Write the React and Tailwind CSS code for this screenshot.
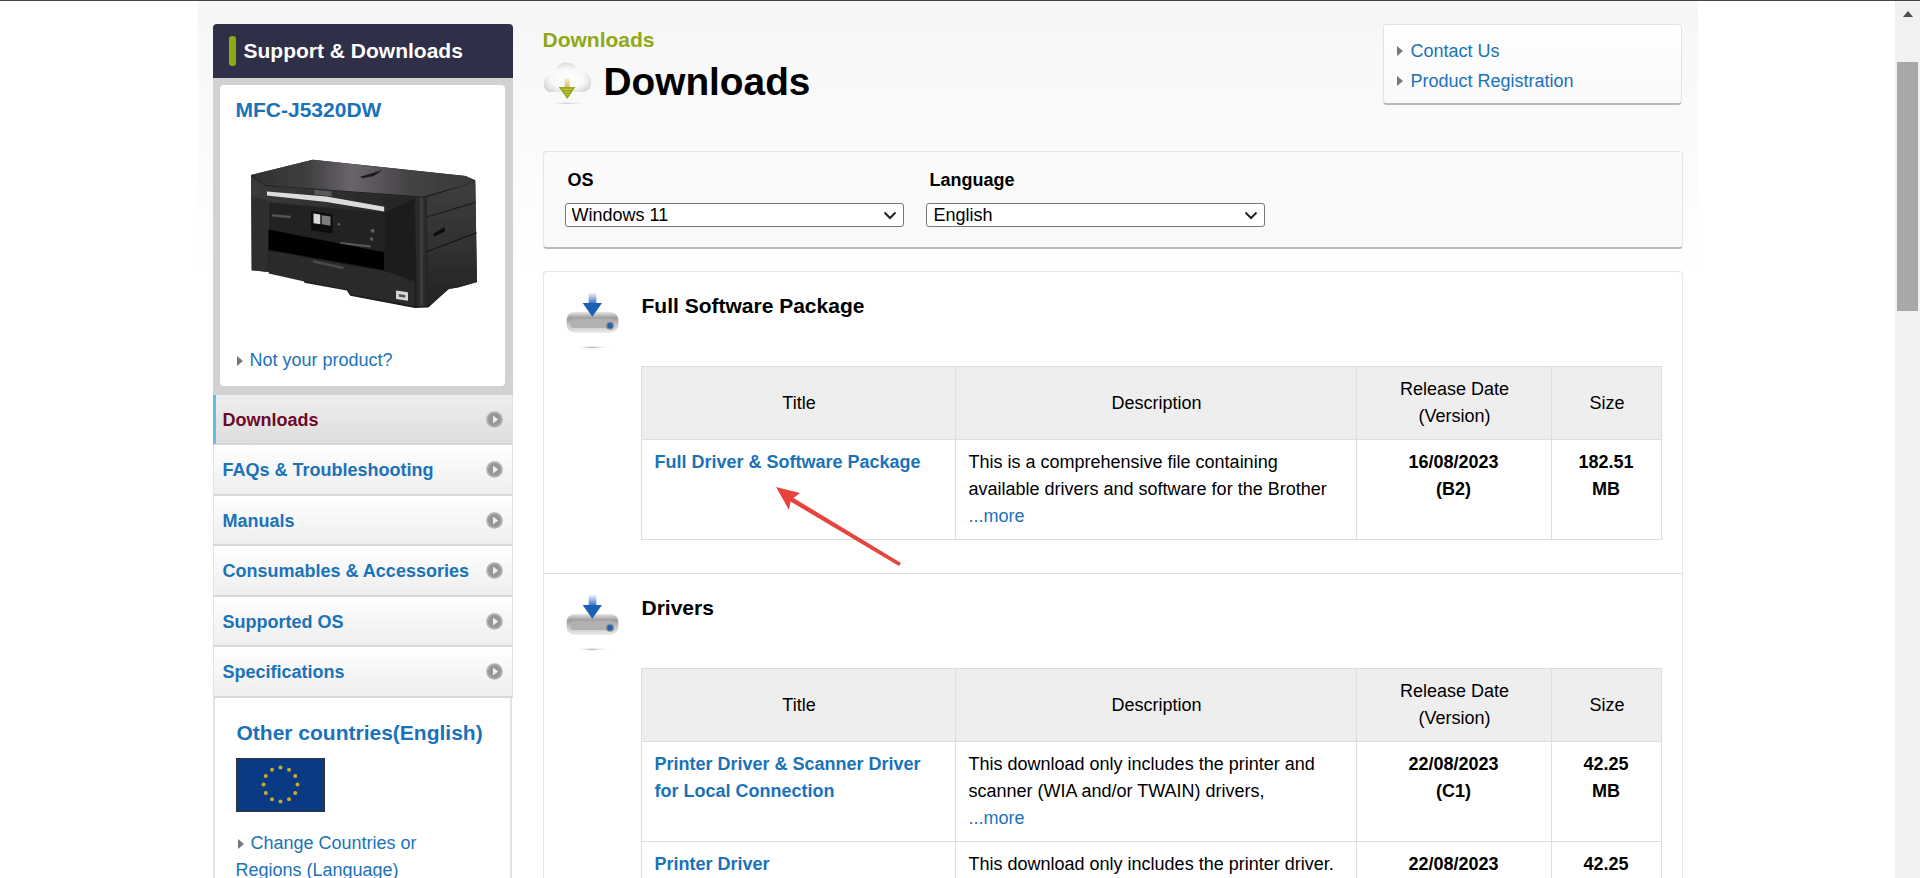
import React from "react";

const Tri = ({ className = "" }) => (
  <span className={"inline-block w-0 h-0 border-y-[5px] border-l-[6px] border-y-transparent border-l-[#777] " + className} />
);

const Circle = () => (
  <svg width="17" height="17" viewBox="0 0 17 17" className="shrink-0">
    <circle cx="8.5" cy="8.5" r="8.3" fill="#b0b0b0" />
    <circle cx="8.5" cy="8.5" r="6.4" fill="#969696" />
    <path d="M7 4.4 L12.2 8.5 L7 12.6 Z" fill="#ededed" />
  </svg>
);

const Drive = ({ id }) => (
  <svg width="53" height="57" viewBox="18 15 159 171">
    <defs>
      <linearGradient id={id + "a"} x1="0" y1="0" x2="0" y2="1">
        <stop offset="0" stopColor="#eef2fb" />
        <stop offset="1" stopColor="#2a6cc0" />
      </linearGradient>
      <linearGradient id={id + "b"} x1="0" y1="0" x2="0" y2="1">
        <stop offset="0" stopColor="#e6e6e6" />
        <stop offset="0.3" stopColor="#9c9a9a" />
        <stop offset="0.6" stopColor="#c6c4c4" />
        <stop offset="1" stopColor="#e8e8e8" />
      </linearGradient>
      <radialGradient id={id + "c"}>
        <stop offset="0" stopColor="#a8a8a8" />
        <stop offset="1" stopColor="#fff" stopOpacity="0" />
      </radialGradient>
      <filter id={id + "f"} x="-10%" y="-10%" width="120%" height="120%">
        <feGaussianBlur stdDeviation="1.6" />
      </filter>
    </defs>
    <g filter={`url(#${id}f)`}>
      <rect x="20" y="72" width="155" height="62" rx="24" fill={`url(#${id}b)`} />
      <rect x="32" y="92" width="130" height="28" rx="8" fill="#b2b0b0" />
      <rect x="86" y="15" width="23" height="34" fill={`url(#${id}a)`} />
      <path d="M68 45 L86 45 L109 45 L126 45 L97 86 Z" fill="#1d5fb6" />
      <circle cx="150" cy="113" r="12" fill="#8a8a8a" />
      <circle cx="150" cy="113" r="8" fill="#1a62b8" />
    </g>
    <ellipse cx="97" cy="178" rx="54" ry="5" fill={`url(#${id}c)`} />
  </svg>
);

const Cloud = () => (
  <svg width="49" height="48" viewBox="15 18 147 144">
    <defs>
      <radialGradient id="cl" cx="0.5" cy="0.55" r="0.6">
        <stop offset="0" stopColor="#ffffff" />
        <stop offset="0.6" stopColor="#f8f8f8" />
        <stop offset="1" stopColor="#cfcfcf" />
      </radialGradient>
      <radialGradient id="cs">
        <stop offset="0" stopColor="#c4c4c4" />
        <stop offset="1" stopColor="#fff" stopOpacity="0" />
      </radialGradient>
      <linearGradient id="cst" x1="0" y1="0" x2="0" y2="1">
        <stop offset="0" stopColor="#fbf3dd" />
        <stop offset="1" stopColor="#e0b860" />
      </linearGradient>
      <filter id="cb" x="-10%" y="-10%" width="120%" height="120%">
        <feGaussianBlur stdDeviation="1.4" />
      </filter>
    </defs>
    <g filter="url(#cb)">
      <path d="M38 120 C22 120 15 104 18 90 C21 74 34 64 48 68 C50 45 70 30 88 32 C108 34 118 45 118 58 C136 52 160 70 160 90 C160 108 148 120 132 120 Z" fill="url(#cl)" />
      <rect x="80" y="78" width="15" height="28" fill="url(#cst)" />
      <path d="M62 105 L112 105 L88 141 Z" fill="#93a81e" />
      <path d="M72 112 H102 M78 120 H96 M83 128 H92" stroke="#d8cb55" strokeWidth="3" />
    </g>
    <ellipse cx="88" cy="154" rx="62" ry="5" fill="url(#cs)" />
  </svg>
);

const Printer = () => (
  <svg width="235" height="158" viewBox="0 0 690 465" className="block">
    <defs>
      <linearGradient id="ptop" x1="0" y1="0" x2="1" y2="0">
        <stop offset="0" stopColor="#303030" />
        <stop offset="0.25" stopColor="#3f3f40" />
        <stop offset="0.45" stopColor="#6a646c" />
        <stop offset="0.7" stopColor="#454345" />
        <stop offset="1" stopColor="#383838" />
      </linearGradient>
      <linearGradient id="pside" x1="0" y1="0" x2="0" y2="1">
        <stop offset="0" stopColor="#3e3e3e" />
        <stop offset="1" stopColor="#242424" />
      </linearGradient>
      <linearGradient id="pfront" x1="0" y1="0" x2="1" y2="0">
        <stop offset="0" stopColor="#3a3a3a" />
        <stop offset="1" stopColor="#232323" />
      </linearGradient>
      <filter id="pb" x="-2%" y="-2%" width="104%" height="104%">
        <feGaussianBlur stdDeviation="1.3" />
      </filter>
    </defs>
    <g filter="url(#pb)">
      <path d="M8 65 L190 20 L640 68 L668 80 L673 380 L620 395 L590 400 L530 455 L490 456 L300 420 L290 405 L165 382 L160 360 L10 345 Z" fill="#1e1e1e" />
      <path d="M8 65 L190 20 L640 68 L668 85 L515 128 L200 105 L50 95 Z" fill="url(#ptop)" />
      <path d="M330 70 L395 50 L370 68 L335 74 Z" fill="#1d1d1d" />
      <path d="M8 68 L50 97 L200 107 L515 130 L490 300 L60 230 L10 130 Z" fill="url(#pfront)" />
      <path d="M10 128 L58 140 L58 350 L10 345 Z" fill="#2e2e2e" />
      <path d="M195 108 L245 113 L245 127 L195 122 Z" fill="#5a5a5a" />
      <path d="M55 113 L230 128 L400 158 L400 172 L230 144 L55 125 Z" fill="#dcdcdc" />
      <path d="M60 145 L400 176 L400 300 L60 230 Z" fill="#232323" />
      <path d="M70 180 L125 185 L125 192 L70 187 Z" fill="#555" />
      <path d="M185 170 L248 180 L248 237 L185 228 Z" fill="#0d0d0d" />
      <path d="M192 178 L212 181 L212 210 L192 207 Z" fill="#d8d8d8" />
      <path d="M216 183 L242 187 L242 214 L216 210 Z" fill="#7c7c7c" />
      <circle cx="366" cy="229" r="6" fill="#5c5c5c" />
      <circle cx="363" cy="253" r="5" fill="#5c5c5c" />
      <circle cx="267" cy="210" r="4" fill="#5c5c5c" />
      <path d="M270 262 L360 272 L360 278 L270 268 Z" fill="#5a5a5a" />
      <path d="M60 225 L400 292 L400 345 L60 285 Z" fill="#040404" />
      <path d="M60 288 L400 348 L490 368 L490 450 L300 415 L290 400 L165 378 L60 355 Z" fill="#2c2c2c" />
      <path d="M190 315 L280 335 L280 342 L190 322 Z" fill="#4a4a4a" />
      <path d="M400 175 L490 135 L490 380 L400 345 Z" fill="#1f1f1f" />
      <path d="M492 130 L525 128 L525 450 L496 452 Z" fill="#2c2c2c" />
      <path d="M505 132 L515 132 L515 450 L505 450 Z" fill="#3a3a3a" />
      <path d="M526 130 L668 85 L673 380 L620 395 L590 400 L528 452 Z" fill="url(#pside)" />
      <path d="M527 188 L670 145 M527 290 L672 235" stroke="#161616" strokeWidth="3" />
      <path d="M545 238 L578 218 L578 232 L548 246 Z" fill="#0c0c0c" />
      <path d="M435 405 L470 410 L470 435 L435 430 Z" fill="#d8d8d8" />
      <path d="M443 415 L462 418 L462 426 L443 423 Z" fill="#555" />
    </g>
  </svg>
);

const MENU = [
  ["Downloads", "h-[50px]", true],
  ["FAQs & Troubleshooting", "h-[51px]"],
  ["Manuals", "h-[50px]"],
  ["Consumables & Accessories", "h-[51px]"],
  ["Supported OS", "h-[50px]"],
  ["Specifications", "h-[51px]"],
];

const Sidebar = () => (
  <aside className="w-[300px] shrink-0">
    <div className="h-[54px] bg-[#2f2f47] rounded-t-[4px] flex items-center pl-4 gap-2">
      <span className="w-[7px] h-[30px] rounded-[3px] bg-[#8fa815]" />
      <span className="text-white font-bold text-[21px]">Support &amp; Downloads</span>
    </div>
    <div className="bg-[#d2d2d2] pt-[7px] pb-[9px] pl-[7px] pr-2">
      <div className="h-[301px] bg-white rounded-[4px] pt-[11px] pl-[15px] flex flex-col">
        <div className="text-[#1a72b9] font-bold text-[21px] leading-[27px] pl-[1px]">MFC-J5320DW</div>
        <div className="mt-[30px] ml-[13px]"><Printer /></div>
        <div className="mt-[36px] flex items-center gap-[7px] text-[18px] leading-[27px] text-[#1a72b9]">
          <Tri className="ml-[2px]" /><span>Not your product?</span>
        </div>
      </div>
    </div>
    {MENU.map(([label, h, active]) => (
      <div
        key={label}
        className={
          h + " flex items-center justify-between pr-[9px] border-b-2 border-[#d8d8d8] border-x border-x-[#e2e2e2] font-bold text-[18px] " +
          (active
            ? "pl-[7px] bg-gradient-to-b from-[#eeeeee] to-[#dedede] text-[#6d0a2a] border-l-[3px] border-l-[#5fbbf0]"
            : "pl-[9px] bg-gradient-to-b from-white to-[#eeeeee] text-[#1a72b9]")
        }
      >
        <span className="mt-[2px]">{label}</span>
        <Circle />
      </div>
    ))}
    <div className="w-[299px] border-x-2 border-[#e2e2e2] bg-white pl-[21px] pt-[21px] pb-10">
      <div className="text-[#1a72b9] font-bold text-[21px] leading-[27px] pl-[1px]">Other countries(English)</div>
      <svg width="89" height="54" viewBox="0 0 89 54" className="mt-[12px] block">
        <rect x="0.5" y="0.5" width="88" height="53" fill="#0a3a84" stroke="#333" />
        {Array.from({ length: 12 }, (_, i) => {
          const a = (i * Math.PI) / 6;
          return <circle key={i} cx={44.5 + 17 * Math.sin(a)} cy={26.5 - 17 * Math.cos(a)} r="2" fill="#c9ab2a" />;
        })}
      </svg>
      <div className="mt-[18px] text-[18px] leading-[27px] text-[#1a72b9]">
        <Tri className="ml-[2px] mr-[7px]" />Change Countries or<br />Regions (Language)
      </div>
    </div>
  </aside>
);

const Th = ({ children }) => (
  <th className="border border-[#dddddd] font-normal text-center align-middle py-[9px] pl-[15px] pr-[13px]">{children}</th>
);
const Td = ({ children, className = "" }) => (
  <td className={"border border-[#dddddd] align-top pt-[9px] pb-[9px] pl-[13px] pr-[11px] " + className}>{children}</td>
);

const Table = ({ rows }) => (
  <table className="w-[1020px] table-fixed border-collapse text-[18px] leading-[27px] text-black">
    <colgroup>
      <col className="w-[314px]" /><col className="w-[401px]" /><col className="w-[195px]" /><col className="w-[110px]" />
    </colgroup>
    <thead>
      <tr className="bg-[#eeeeee]">
        <Th>Title</Th><Th>Description</Th><Th>Release Date<br />(Version)</Th><Th>Size</Th>
      </tr>
    </thead>
    <tbody>
      {rows.map((r) => (
        <tr key={r.title}>
          <Td className="font-bold text-[#1a72b9]">{r.title}</Td>
          <Td>{r.desc}{r.more && <><br /><span className="text-[#1a72b9]">...more</span></>}</Td>
          <Td className="font-bold text-center !pl-3 !pr-3">{r.date}<br />{r.ver}</Td>
          <Td className="font-bold text-center !pl-3 !pr-3">{r.size}<br />MB</Td>
        </tr>
      ))}
    </tbody>
  </table>
);

const Section = ({ id, title, rows, border }) => (
  <section className={"flex pt-[21px] pb-[33px] " + (border ? "border-t border-[#dfdfdf]" : "")}>
    <div className="w-[97px] shrink-0 pl-[22px]"><Drive id={id} /></div>
    <div>
      <h2 className="text-[21px] font-bold leading-[27px] -mt-[1px] mb-[47px] pl-[1px] text-black">{title}</h2>
      <Table rows={rows} />
    </div>
  </section>
);

const Select = ({ value, pad }) => (
  <div className="relative mt-[11px] w-[339px] h-[24px]">
    <select defaultValue={value} className={"block w-full h-full appearance-none bg-white border border-[#767676] rounded-[3px] text-[18px] leading-[22px] " + pad}>
      <option>{value}</option>
    </select>
    <svg width="14" height="9" viewBox="0 0 14 9" className="absolute right-[7px] top-[8px] pointer-events-none">
      <path d="M1.5 1.5 L7 7 L12.5 1.5" fill="none" stroke="#222" strokeWidth="2" />
    </svg>
  </div>
);

const Main = () => (
  <main className="w-[1140px] shrink-0 relative">
    <div className="h-[127px] flex justify-between">
      <div>
        <div className="text-[#8fa815] font-bold text-[21px] leading-[27px] mt-[2px]">Downloads</div>
        <div className="flex items-center gap-3 mt-[5px]">
          <Cloud />
          <h1 className="text-[38.8px] leading-[48px] font-bold text-black">Downloads</h1>
        </div>
      </div>
      <div className="w-[299px] h-[81px] mr-[1px] bg-gradient-to-b from-white to-[#f9f9f9] rounded-[4px] border border-[#e3e3e3] border-b-2 border-b-[#b9b9b9] pl-[13px] pt-[11px] text-[18px] leading-[30px] text-[#1a72b9]">
        <div className="flex items-center gap-2"><Tri /><span>Contact Us</span></div>
        <div className="flex items-center gap-2"><Tri /><span>Product Registration</span></div>
      </div>
    </div>
    <div className="h-[98px] bg-gradient-to-b from-[#fbfbfb] to-[#f9f9f9] rounded-[4px] border border-[#e5e5e5] border-b-2 border-b-[#b9b9b9] flex gap-[22px] pl-[21px] pt-[16px] text-black">
      <div className="w-[339px]">
        <div className="font-bold text-[18px] leading-[24px] pl-[3px]">OS</div>
        <Select value="Windows 11" pad="pl-[6px]" />
      </div>
      <div className="w-[339px]">
        <div className="font-bold text-[18px] leading-[24px] pl-[4px]">Language</div>
        <Select value="English" pad="pl-[7px]" />
      </div>
    </div>
    <div className="mt-[22px] bg-white rounded-t-[4px] border-x border-t border-[#e5e5e5]">
      <Section
        id="d1"
        title="Full Software Package"
        rows={[{
          title: "Full Driver & Software Package",
          desc: <>This is a comprehensive file containing<br />available drivers and software for the Brother</>,
          more: true, date: "16/08/2023", ver: "(B2)", size: "182.51",
        }]}
      />
      <Section
        id="d2"
        border
        title="Drivers"
        rows={[
          {
            title: <>Printer Driver &amp; Scanner Driver<br />for Local Connection</>,
            desc: <>This download only includes the printer and<br />scanner (WIA and/or TWAIN) drivers,</>,
            more: true, date: "22/08/2023", ver: "(C1)", size: "42.25",
          },
          {
            title: "Printer Driver",
            desc: <>This download only includes the printer driver.</>,
            date: "22/08/2023", ver: "", size: "42.25",
          },
        ]}
      />
    </div>
    <svg width="130" height="80" viewBox="0 0 130 80" className="absolute left-[231px] top-[462px] pointer-events-none">
      <path d="M2 1 L26 7 L19.5 12 L127 77 L125 80 L16.5 15.5 L15 24 Z" fill="#e8433e" />
    </svg>
  </main>
);

export default function App() {
  return (
    <div className="h-[878px] overflow-hidden flex bg-white text-[18px] [font-family:'Liberation_Sans',Arial,sans-serif] border-t border-[#444444]">
      <div className="w-[1895px] shrink-0">
        <div className="mx-auto w-[1500px] h-[877px] flex gap-[30px] pl-[15px] pt-[23px] bg-[linear-gradient(#f6f6f6,#ffffff_270px)]">
          <Sidebar />
          <Main />
        </div>
      </div>
      <div className="w-[25px] shrink-0 bg-[#f1f1f1] pl-[2px] pr-[2px]">
        <div className="h-[61px] pt-[10px] flex justify-center">
          <span className="w-0 h-0 border-x-[5.5px] border-b-[6px] border-x-transparent border-b-[#505050]" />
        </div>
        <div className="h-[249px] bg-[#a8a8a8]" />
      </div>
    </div>
  );
}
